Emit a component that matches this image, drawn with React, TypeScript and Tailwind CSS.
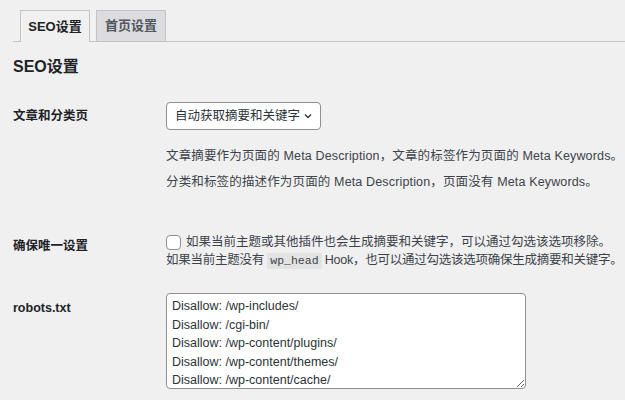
import React from 'react';

const font = "font-['Liberation_Sans','Noto_Sans_CJK_SC',sans-serif]";

const App: React.FC = () => {
    const robots = [
        'Disallow: /wp-includes/',
        'Disallow: /cgi-bin/',
        'Disallow: /wp-content/plugins/',
        'Disallow: /wp-content/themes/',
        'Disallow: /wp-content/cache/',
    ].join('\n');

    return (
        <div className={`w-[625px] h-[400px] overflow-hidden bg-[#f0f0f1] text-[12.5px] text-[#3c434a] ${font}`}>
            {/* Tabs */}
            <div className="ml-[13px] mt-[10px] flex h-[32px] border-b border-[#c3c4c7] pl-[7px] text-[13px]">
                <div className="-mb-px flex h-[32px] w-[70px] items-center justify-center border border-b-0 border-[#c3c4c7] bg-[#f0f0f1] font-semibold text-[#1d2327]">
                    SEO设置
                </div>
                <div className="ml-[6px] flex h-[31px] w-[70px] items-center justify-center border border-b-0 border-[#c3c4c7] bg-[#dcdcde] font-semibold text-[#50575e]">
                    首页设置
                </div>
            </div>

            <div className="pl-[13px]">
                <h2 className="mt-[15px] text-[16px] font-semibold leading-[20px] text-[#1d2327]">SEO设置</h2>

                {/* Row 1 */}
                <div className="mt-[25px] flex">
                    <div className="w-[153px] shrink-0 pt-[5px] font-semibold text-[#1d2327]">文章和分类页</div>
                    <div className="whitespace-nowrap">
                        <div className="flex h-[28px] w-[155px] items-center justify-between rounded-[4px] border border-[#8c8f94] bg-white pl-[8px] pr-[7px] text-[#2c3338]">
                            <span>自动获取摘要和关键字</span>
                            <svg width="10" height="10" viewBox="0 0 10 10" fill="none" stroke="#2c3338" strokeWidth="1.3">
                                <path d="M2 3.5 L5 6.5 L8 3.5" />
                            </svg>
                        </div>
                        <p className="mt-[17px] leading-[18px] tracking-[0.15px]">文章摘要作为页面的 Meta Description，文章的标签作为页面的 Meta Keywords。</p>
                        <p className="mt-[8px] leading-[18px] tracking-[0.15px]">分类和标签的描述作为页面的 Meta Description，页面没有 Meta Keywords。</p>
                    </div>
                </div>

                {/* Row 2 */}
                <div className="mt-[42px] flex">
                    <div className="w-[153px] shrink-0 pt-[4px] font-semibold text-[#1d2327]">确保唯一设置</div>
                    <div className="whitespace-nowrap leading-[18px]">
                        <div className="flex items-center">
                            <span className="mr-[5px] inline-block h-[15px] w-[15px] shrink-0 rounded-[4px] border border-[#8c8f94] bg-white" />
                            <span>如果当前主题或其他插件也会生成摘要和关键字，可以通过勾选该选项移除。</span>
                        </div>
                        <div className="tracking-[-0.25px]">
                            如果当前主题没有 <code className="bg-[#e3e3e4] px-[3px] pt-[1px] pb-[2px] font-['Liberation_Mono',monospace] text-[11.5px] tracking-normal">wp_head</code> Hook，也可以通过勾选该选项确保生成摘要和关键字。
                        </div>
                    </div>
                </div>

                {/* Row 3 */}
                <div className="mt-[23px] flex">
                    <div className="w-[153px] shrink-0 pt-[6px] font-semibold text-[#1d2327]">robots.txt</div>
                    <textarea
                        readOnly
                        defaultValue={robots}
                        rows={5}
                        className="h-[96px] w-[360px] resize-y overflow-hidden rounded-[4px] border border-[#8c8f94] bg-white px-[5px] pt-[3px] pb-0 text-[12.5px] leading-[18.6px] text-[#2c3338] outline-none"
                    />
                </div>
            </div>
        </div>
    );
};

export default App;
